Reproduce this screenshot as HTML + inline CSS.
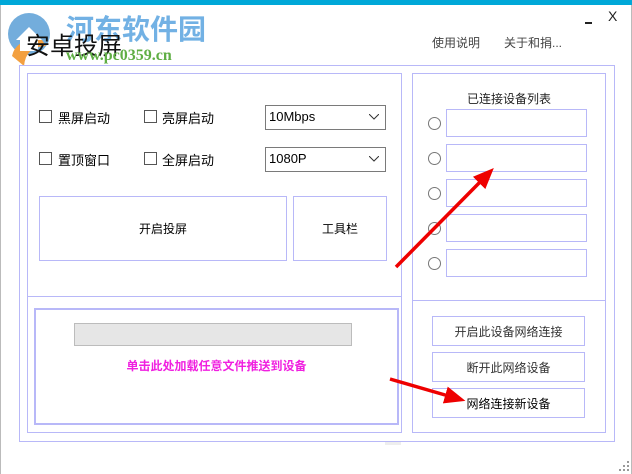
<!DOCTYPE html>
<html><head><meta charset="utf-8"><style>
*{box-sizing:border-box;margin:0;padding:0}
body{width:632px;height:474px;background:#fff;position:relative;overflow:hidden;font-family:"Liberation Sans","Noto Sans CJK SC",sans-serif;font-size:13px;color:#000}
.a{position:absolute}
.b{position:absolute;border:1px solid #b8b8f8}
.cb{position:absolute;width:13px;height:13px;border:1px solid #555;background:#fff}
.lbl{position:absolute;font-size:13px}
.combo{position:absolute;border:1px solid #7a7a7a;background:#fff;font-size:13px;padding:3px 0 0 3px}
.combo svg{position:absolute;right:6px;top:8px}
.btn{position:absolute;border:1px solid #b8b8f8;display:flex;align-items:center;justify-content:center;font-size:12px;color:#333}
.rad{position:absolute;width:13px;height:13px;border:1px solid #777;border-radius:50%;background:#fff}
.tb{position:absolute;width:141px;height:28px;border:1px solid #b8b8f8}
</style></head><body>
<div class="a" style="left:0;top:0;width:632px;height:5px;background:#00a8d8"></div>
<div class="a" style="left:0;top:5px;width:1px;height:469px;background:#bbb"></div>
<div class="a" style="right:0;top:5px;width:1px;height:469px;background:#bbb"></div>
<svg class="a" style="left:4px;top:10px" width="52" height="58"><circle cx="25" cy="24" r="21" fill="#5a9fd6" opacity=".85"/><path d="M8 46 Q12 28 38 30 L42 36 Q22 36 20 56Z" fill="#f3a040"/><path d="M12 30 L25 17 L38 30 L34 30 L34 41 L16 41 L16 30Z" fill="#fff"/></svg>
<div class="a" style="left:66px;top:8px;font-size:28px;font-weight:bold;color:#5aa4e0;opacity:.85;letter-spacing:0px">河东软件园</div>
<div class="a" style="left:26px;top:26px;font-size:24px;color:#111">安卓投屏</div>
<div class="a" style="left:66px;top:47px;font-size:16px;font-weight:bold;color:#5fae44;font-family:'Liberation Serif',serif">www.pc0359.cn</div>
<div class="a" style="left:432px;top:34px;font-size:12px;color:#444">使用说明</div>
<div class="a" style="left:504px;top:34px;font-size:12px;color:#444">关于和捐...</div>
<div class="a" style="left:585px;top:22px;width:7px;height:2px;background:#222"></div>
<div class="a" style="left:608px;top:8px;font-size:14px;color:#222">X</div>

<div class="b" style="left:19px;top:65px;width:596px;height:377px"></div>
<div class="b" style="left:27px;top:73px;width:375px;height:360px"></div>
<div class="a" style="left:27px;top:296px;width:375px;height:1px;background:#b8b8f8"></div>
<div class="b" style="left:34px;top:308px;width:365px;height:117px;border-width:2px"></div>
<div class="b" style="left:412px;top:73px;width:194px;height:360px"></div>
<div class="a" style="left:412px;top:300px;width:194px;height:1px;background:#b8b8f8"></div>

<div class="cb" style="left:39px;top:110px"></div><div class="lbl" style="left:58px;top:108px">黑屏启动</div>
<div class="cb" style="left:144px;top:110px"></div><div class="lbl" style="left:162px;top:108px">亮屏启动</div>
<div class="cb" style="left:39px;top:152px"></div><div class="lbl" style="left:58px;top:150px">置顶窗口</div>
<div class="cb" style="left:144px;top:152px"></div><div class="lbl" style="left:162px;top:150px">全屏启动</div>
<div class="combo" style="left:265px;top:105px;width:121px;height:25px">10Mbps<svg width="10" height="6"><path d="M0 0L5 5L10 0" fill="none" stroke="#333"/></svg></div>
<div class="combo" style="left:265px;top:147px;width:121px;height:25px">1080P<svg width="10" height="6"><path d="M0 0L5 5L10 0" fill="none" stroke="#333"/></svg></div>
<div class="btn" style="left:39px;top:196px;width:248px;height:65px;color:#000">开启投屏</div>
<div class="btn" style="left:293px;top:196px;width:94px;height:65px;color:#000">工具栏</div>

<div class="a" style="left:74px;top:323px;width:278px;height:23px;background:#e6e6e6;border:1px solid #bcbcbc"></div>
<div class="a" style="left:34px;top:357px;width:365px;text-align:center;font-size:12px;font-weight:bold;color:#f020e0">单击此处加载任意文件推送到设备</div>

<div class="a" style="left:412px;top:90px;width:194px;text-align:center;font-size:12px;color:#222">已连接设备列表</div>
<div class="rad" style="left:428px;top:117px"></div><div class="tb" style="left:446px;top:109px"></div>
<div class="rad" style="left:428px;top:152px"></div><div class="tb" style="left:446px;top:144px"></div>
<div class="rad" style="left:428px;top:187px"></div><div class="tb" style="left:446px;top:179px"></div>
<div class="rad" style="left:428px;top:222px"></div><div class="tb" style="left:446px;top:214px"></div>
<div class="rad" style="left:428px;top:257px"></div><div class="tb" style="left:446px;top:249px"></div>

<div class="btn" style="left:432px;top:316px;width:153px;height:30px">开启此设备网络连接</div>
<div class="btn" style="left:432px;top:352px;width:153px;height:30px">断开此网络设备</div>
<div class="btn" style="left:432px;top:388px;width:153px;height:30px;color:#000">网络连接新设备</div>
<div class="a" style="left:385px;top:442px;width:16px;height:3px;background:#eee"></div>

<svg class="a" style="left:0;top:0" width="632" height="474">
<defs><marker id="m" markerWidth="6" markerHeight="5" refX="2" refY="2.5" orient="auto"><path d="M0 0L6 2.5L0 5Z" fill="#e00"/></marker></defs>
<line x1="396" y1="267" x2="484" y2="178" stroke="#e00" stroke-width="3.5" marker-end="url(#m)"/>
<line x1="390" y1="379" x2="452" y2="397" stroke="#e00" stroke-width="3.5" marker-end="url(#m)"/>
<g fill="#999"><rect x="627" y="461" width="2" height="2"/><rect x="623" y="465" width="2" height="2"/><rect x="627" y="465" width="2" height="2"/><rect x="619" y="469" width="2" height="2"/><rect x="623" y="469" width="2" height="2"/><rect x="627" y="469" width="2" height="2"/></g>
</svg>
</body></html>
